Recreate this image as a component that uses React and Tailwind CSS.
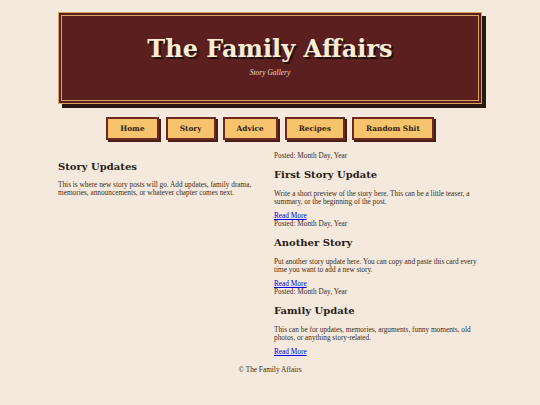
export default function App() {
  const posts = [
    {
      title: "First Story Update",
      text: "Write a short preview of the story here. This can be a little teaser, a summary, or the beginning of the post.",
    },
    {
      title: "Another Story",
      text: "Put another story update here. You can copy and paste this card every time you want to add a new story.",
    },
    {
      title: "Family Update",
      text: "This can be for updates, memories, arguments, funny moments, old photos, or anything story-related.",
    },
  ];
  const nav = ["Home", "Story", "Advice", "Recipes", "Random Shit"];
  const body = { fontFamily: '"Liberation Serif", "Times New Roman", serif' };

  return (
    <div className="min-h-[405px] bg-[#f4e9dc] pt-[12px] text-[#3b2c23]" style={{ fontFamily: '"DejaVu Serif", Georgia, serif' }}>
      <header className="mx-auto w-[424px] h-[92px] border-[4px] border-double border-[#dba45c] bg-[#5b1f1f] shadow-[4px_4px_0_#2a1812] flex flex-col items-center pt-[16px]">
        <h1 className="text-[24px] leading-[34px] font-bold text-[#fcecd6] [text-shadow:2px_2px_0_#1e120d]">The Family Affairs</h1>
        <p className="text-[7.5px] italic text-[#f3dcc4] mt-[1px]" style={body}>Story Gallery</p>
      </header>

      <nav className="flex justify-center gap-[7px] mt-[13px]">
        {nav.map((n) => (
          <a key={n} href="#" className="h-[23px] px-[12px] flex items-center bg-[#f7c46d] border-2 border-[#6a2a20] shadow-[2px_2px_0_#4a1d16] text-[7.4px] font-bold text-[#33200f]">
            {n}
          </a>
        ))}
      </nav>

      <main className="mx-auto w-[424px] grid grid-cols-[208px_1fr] gap-[8px] mt-[12px]">
        <section className="pt-[8px]">
          <h2 className="text-[10px] font-bold text-[#2b1d15] leading-[14px]">Story Updates</h2>
          <p className="text-[7.3px] leading-[8px] mt-[7px]" style={body}>
            This is where new story posts will go. Add updates, family drama, memories, announcements, or whatever chapter comes next.
          </p>
        </section>
        <section>
          {posts.map((p) => (
            <article key={p.title}>
              <div className="text-[7.3px] leading-[8px]" style={body}>Posted: Month Day, Year</div>
              <h2 className="text-[10px] font-bold text-[#2b1d15] leading-[14px] mt-[8px]">{p.title}</h2>
              <p className="text-[7.3px] leading-[8px] mt-[8px]" style={body}>{p.text}</p>
              <a href="#" className="block text-[7.3px] leading-[8px] mt-[6px] text-[#0000ee] underline" style={body}>Read More</a>
            </article>
          ))}
        </section>
      </main>

      <footer className="text-center text-[7.3px] leading-[8px] mt-[10px] pb-[8px]" style={body}>© The Family Affairs</footer>
    </div>
  );
}
